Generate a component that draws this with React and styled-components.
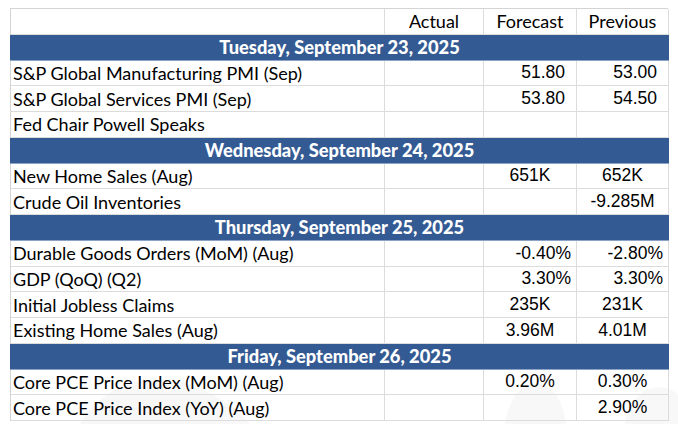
import React from 'react'
import styled, { createGlobalStyle } from 'styled-components'

const Global = createGlobalStyle`
  html, body { margin: 0; background: #fff; }
  body { width: 678px; height: 424px; overflow: hidden; }
`

const days = [
  {
    title: 'Tuesday, September 23, 2025',
    rows: [
      { name: 'S&P Global Manufacturing PMI (Sep)', forecast: '51.80', previous: '53.00', align: 'right', pad: 11 },
      { name: 'S&P Global Services PMI (Sep)', forecast: '53.80', previous: '54.50', align: 'right', pad: 11 },
      { name: 'Fed Chair Powell Speaks' },
    ],
  },
  {
    title: 'Wednesday, September 24, 2025',
    rows: [
      { name: 'New Home Sales (Aug)', forecast: '651K', previous: '652K' },
      { name: 'Crude Oil Inventories', previous: '-9.285M' },
    ],
  },
  {
    title: 'Thursday, September 25, 2025',
    rows: [
      { name: 'Durable Goods Orders (MoM) (Aug)', forecast: '-0.40%', previous: '-2.80%', align: 'right', pad: 5 },
      { name: 'GDP (QoQ) (Q2)', forecast: '3.30%', previous: '3.30%', align: 'right', pad: 5 },
      { name: 'Initial Jobless Claims', forecast: '235K', previous: '231K' },
      { name: 'Existing Home Sales (Aug)', forecast: '3.96M', previous: '4.01M' },
    ],
  },
  {
    title: 'Friday, September 26, 2025',
    rows: [
      { name: 'Core PCE Price Index (MoM) (Aug)', forecast: '0.20%', previous: '0.30%' },
      { name: 'Core PCE Price Index (YoY) (Aug)', previous: '2.90%' },
    ],
  },
]

export default function App() {
  return (
    <Page>
      <Global />
      <Watermark viewBox="0 0 678 424" aria-hidden="true">
        <path d="M80 424 C110 370 190 360 250 424 Z" fill="#f8f8f8" />
        <path d="M505 424 C512 370 560 370 566 424 Z" fill="#f8f8f8" />
        <path d="M625 424 C630 385 665 380 678 395 L678 424 Z" fill="#f8f8f8" />
      </Watermark>
      <Sheet>
        <Cell />
        <Head>Actual</Head>
        <Head>Forecast</Head>
        <Head>Previous</Head>
        {days.map((day) => (
          <React.Fragment key={day.title}>
            <Band>{day.title}</Band>
            {day.rows.map((row) => (
              <React.Fragment key={row.name}>
                <Label>{row.name}</Label>
                <Value />
                <Value $align={row.align} $pad={row.pad}>{row.forecast}</Value>
                <Value $align={row.align} $pad={row.pad}>{row.previous}</Value>
              </React.Fragment>
            ))}
          </React.Fragment>
        ))}
      </Sheet>
    </Page>
  )
}

const Page = styled.div`
  position: relative;
  width: 678px;
  height: 424px;
  padding: 8px 0 0 10px;
  box-sizing: border-box;
  overflow: hidden;
`

const Watermark = styled.svg`
  position: absolute;
  left: 0;
  top: 0;
  width: 678px;
  height: 424px;
`

const Sheet = styled.div`
  position: relative;
  display: grid;
  grid-template-columns: 374px 99px 93px 92px;
  grid-auto-rows: 25.75px;
  border-left: 1px solid #d4d4d4;
  border-top: 1px solid #d4d4d4;
  width: 658px;
  box-sizing: border-box;
`

const Cell = styled.div`
  box-sizing: border-box;
  border-right: 1px solid #dcdcdc;
  border-bottom: 1px solid #dcdcdc;
  display: flex;
  align-items: center;
  white-space: nowrap;
  overflow: hidden;
  color: #000;
`

const Head = styled(Cell)`
  justify-content: center;
  font-family: Lato, "Liberation Sans", sans-serif;
  font-size: 18px;
`

const Label = styled(Cell)`
  padding-left: 2px;
  font-family: Lato, "Liberation Sans", sans-serif;
  font-size: 18px;
`

const Value = styled(Cell)`
  justify-content: ${(p) => (p.$align === 'right' ? 'flex-end' : 'center')};
  padding-right: ${(p) => (p.$align === 'right' ? p.$pad : 0)}px;
  font-family: "Liberation Sans", Arial, sans-serif;
  font-size: 17.5px;
`

const Band = styled.div`
  grid-column: 1 / -1;
  margin-left: -1px;
  background: #335a93;
  color: #fff;
  display: flex;
  align-items: center;
  justify-content: center;
  font-family: Lato, "Liberation Sans", sans-serif;
  font-weight: 900;
  font-size: 18.3px;
  border-bottom: 1px solid #8aa3c6;
  box-sizing: border-box;
`
